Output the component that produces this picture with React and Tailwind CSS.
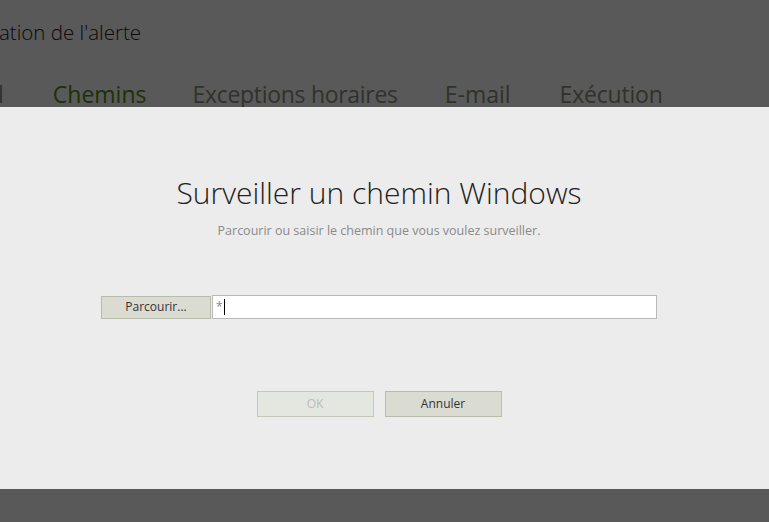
export default function App() {
  const tabs = [
    { label: 'Chemins', cls: 'ml-[49px] text-[#5c8a12]' },
    { label: 'Exceptions horaires', cls: 'ml-[46px] tracking-[-0.3px]' },
    { label: 'E-mail', cls: 'ml-[47px]' },
    { label: 'Exécution', cls: 'ml-[49px] tracking-[-0.2px]' },
  ];

  return (
    <div className="relative h-[522px] w-[769px] overflow-hidden bg-white font-['Open_Sans',sans-serif]">
      {/* page behind the dialog */}
      <div className="pt-[16px]">
        <div className="-ml-[1px] text-[20.5px] font-light leading-[32px] text-[#222]">ation de l'alerte</div>
        <div className="mt-[30px] flex text-[23px] leading-[32px] text-[#8a8f80]">
          <span className="-ml-[2px]">l</span>
          {tabs.map((t) => (
            <span key={t.label} className={t.cls}>
              {t.label}
            </span>
          ))}
        </div>
      </div>

      {/* modal overlay */}
      <div className="absolute inset-0 flex flex-col bg-[#000]/65">
        <div className="h-[107px] shrink-0" />
        <div className="h-[382px] shrink-0 bg-[#ececec]">
          <div className="flex w-[758px] flex-col items-center">
            <h1 className="mt-[66px] text-[30px] font-light leading-[40px] text-[#222]">Surveiller un chemin Windows</h1>
            <p className="mt-[10px] text-[12.5px] leading-[16px] text-[#8a8a8a]">
              Parcourir ou saisir le chemin que vous voulez surveiller.
            </p>

            <div className="mt-[56px] flex w-[556px] items-center gap-[1px]">
              <button className="h-[23px] w-[110px] shrink-0 border border-[#b8bcaa] bg-[#dadcd2] text-[12px] text-[#333]">
                Parcourir...
              </button>
              <div className="flex h-[24px] flex-1 items-center border border-[#b9b9b9] bg-white pl-[3px] text-[12px] text-[#888]">
                *<span className="ml-[1px] h-[16px] w-[1px] bg-black" />
              </div>
            </div>

            <div className="mt-[72px] flex gap-[11px]">
              <button className="h-[26px] w-[117px] border border-[#c4c8b8] bg-[#e4e6e0] text-[12px] text-[#bbb]">OK</button>
              <button className="h-[26px] w-[117px] border border-[#b8bcaa] bg-[#dadcd2] text-[12px] text-[#333]">
                Annuler
              </button>
            </div>
          </div>
        </div>
        <div className="flex-1" />
      </div>
    </div>
  );
}
